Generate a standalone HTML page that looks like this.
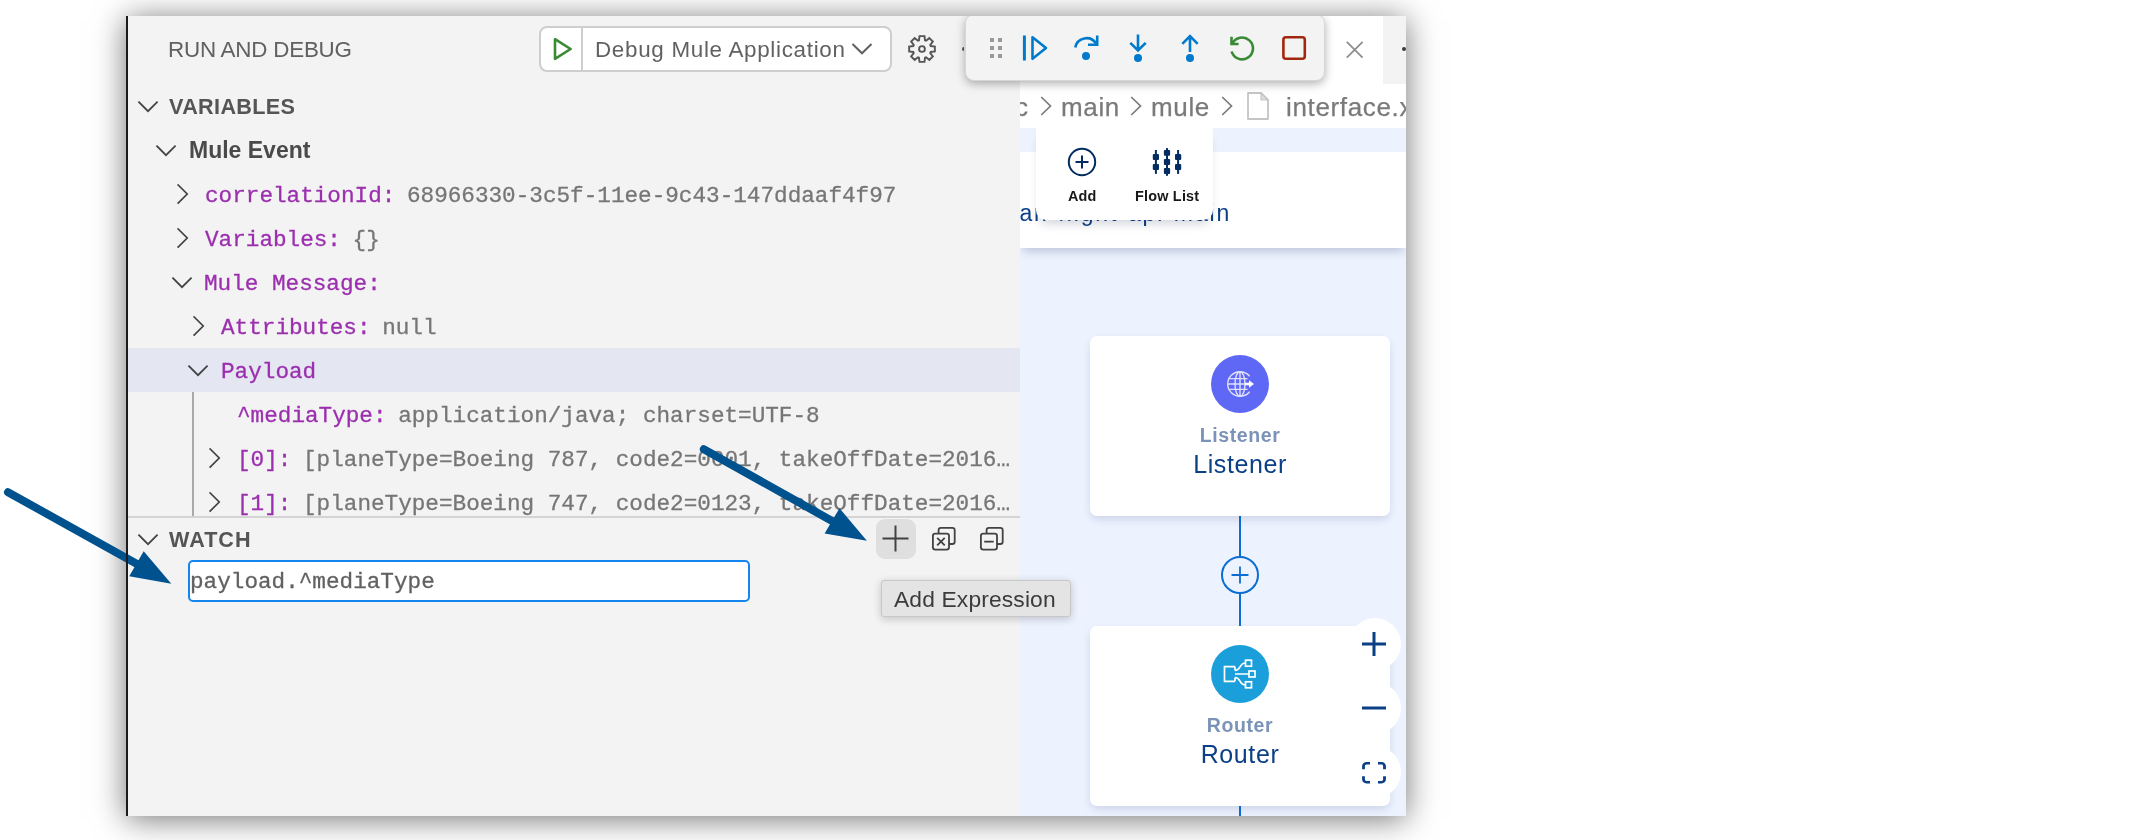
<!DOCTYPE html>
<html>
<head>
<meta charset="utf-8">
<title>Run and Debug</title>
<style>
*{box-sizing:border-box;margin:0;padding:0}
html,body{width:2142px;height:840px;background:#fff;overflow:hidden}
body{font-family:"Liberation Sans",sans-serif;position:relative;color:#616161}
#win{position:absolute;left:126px;top:16px;width:1280px;height:800px;background:#f3f3f3;box-shadow:0 3px 30px rgba(0,0,0,.55)}
#clip{position:absolute;left:0;top:0;width:1280px;height:800px;overflow:hidden}
#edge{position:absolute;left:0;top:0;width:2px;height:800px;background:#1b1b1b;z-index:30}
/* coordinates inside #win are (page-126, page-16) */
#side{position:absolute;left:2px;top:0;width:892px;height:800px;background:#f3f3f3;overflow:hidden}
#ed{position:absolute;left:894px;top:0;width:386px;height:800px;background:#fff;overflow:hidden}
.t{position:absolute;white-space:nowrap;line-height:1;will-change:transform}
.mono{font-family:"Liberation Mono",monospace;font-size:22.66px;color:#767676;margin-top:1.500px;-webkit-text-stroke:.3px}
.v{margin-left:-2px}
.k{color:#9b2fae}
.hd{font-weight:bold;font-size:21.6px;color:#555}
svg{position:absolute;overflow:visible}
.chev{fill:none;stroke:#424242;stroke-width:1.7;stroke-linecap:square;stroke-linejoin:miter}
</style>
</head>
<body>
<div id="win"><div id="clip">
  <div id="side">
    <!-- coordinates inside #side are (page-128, page-16) -->
    <div class="t" id="ttl" style="left:39.700px;top:22.5px;font-size:22.4px;color:#616161;letter-spacing:-.22px">RUN AND DEBUG</div>

    <!-- launch dropdown -->
    <div style="position:absolute;left:411px;top:10px;width:353px;height:46px;border:2px solid #cecece;border-radius:8px;background:#fff"></div>
    <div style="position:absolute;left:453px;top:12px;width:2px;height:42px;background:#cecece"></div>
    <svg style="left:425px;top:21px" width="20" height="24" viewBox="0 0 20 24"><path d="M2 2.2 L17.6 12 L2 21.8 Z" fill="none" stroke="#388a34" stroke-width="2.6" stroke-linejoin="round"/></svg>
    <div class="t" id="dd" style="left:467px;top:23.400px;font-size:22.400px;letter-spacing:.7px;color:#616161">Debug Mule Application</div>
    <svg style="left:722px;top:26.200px" width="24" height="14" viewBox="0 0 24 14"><path d="M2.500 2 L12 11.300 L21.500 2" fill="none" stroke="#616161" stroke-width="2"/></svg>
    <!-- gear -->
    <svg id="gear" style="left:778.950px;top:17.900px" width="30" height="30" viewBox="0 0 30 30"><g fill="none" stroke="#555" stroke-width="1.900" stroke-linejoin="miter"><circle cx="15" cy="15" r="2.900"/><path d="M12.00 6.30L12.50 2.14L17.50 2.14L18.00 6.30L19.03 6.73L22.33 4.14L25.86 7.67L23.27 10.97L23.70 12.00L27.86 12.50L27.86 17.50L23.70 18.00L23.27 19.03L25.86 22.33L22.33 25.86L19.03 23.27L18.00 23.70L17.50 27.86L12.50 27.86L12.00 23.70L10.97 23.27L7.67 25.86L4.14 22.33L6.73 19.03L6.30 18.00L2.14 17.50L2.14 12.50L6.30 12.00L6.73 10.97L4.14 7.67L7.67 4.14L10.97 6.73Z"/></g></svg>
    <div style="position:absolute;left:834.200px;top:31px;width:2.200px;height:4px;border-radius:2px 0 0 2px;background:#555"></div>

    <!-- VARIABLES -->
    <svg style="left:10px;top:85px" width="20" height="12" viewBox="0 0 20 12"><path class="chev" d="M1 1.2 L10 10.2 L19 1.2"/></svg>
    <div class="t hd" style="left:40.5px;top:80px;letter-spacing:.35px">VARIABLES</div>

    <svg style="left:28px;top:129px" width="20" height="12" viewBox="0 0 20 12"><path class="chev" d="M1 1.2 L10 10.2 L19 1.2"/></svg>
    <div class="t" style="left:60.5px;top:123.3px;font-weight:bold;font-size:23px;color:#4a4a4a">Mule Event</div>

    <svg style="left:49px;top:168px" width="12" height="20" viewBox="0 0 12 20"><path class="chev" d="M1.2 1 L10.2 10 L1.2 19"/></svg>
    <div class="t mono" style="left:77px;top:167px"><span class="k">correlationId:</span> <span class="v">68966330-3c5f-11ee-9c43-147ddaaf4f97</span></div>

    <svg style="left:49px;top:212px" width="12" height="20" viewBox="0 0 12 20"><path class="chev" d="M1.2 1 L10.2 10 L1.2 19"/></svg>
    <div class="t mono" style="left:77px;top:211px"><span class="k">Variables:</span> <span class="v">{}</span></div>

    <svg style="left:44px;top:261px" width="20" height="12" viewBox="0 0 20 12"><path class="chev" d="M1 1.2 L10 10.2 L19 1.2"/></svg>
    <div class="t mono" style="left:76px;top:255px"><span class="k">Mule Message:</span></div>

    <svg style="left:65px;top:300px" width="12" height="20" viewBox="0 0 12 20"><path class="chev" d="M1.2 1 L10.2 10 L1.2 19"/></svg>
    <div class="t mono" style="left:93px;top:299px"><span class="k">Attributes:</span> <span class="v">null</span></div>

    <div style="position:absolute;left:0;top:332px;width:892px;height:44px;background:#e4e6f1"></div>
    <svg style="left:60px;top:349px" width="20" height="12" viewBox="0 0 20 12"><path class="chev" d="M1 1.2 L10 10.2 L19 1.2"/></svg>
    <div class="t mono" style="left:93px;top:343px"><span class="k">Payload</span></div>

    <div style="position:absolute;left:64px;top:376px;width:2px;height:124px;background:#a9a9a9"></div>
    <div class="t mono" style="left:109px;top:387px"><span class="k">^mediaType:</span> <span class="v">application/java; charset=UTF-8</span></div>

    <svg style="left:81px;top:432px" width="12" height="20" viewBox="0 0 12 20"><path class="chev" d="M1.2 1 L10.2 10 L1.2 19"/></svg>
    <div class="t mono" style="left:109px;top:431px"><span class="k">[0]:</span> <span class="v">[planeType=Boeing 787, code2=0001, takeOffDate=2016…</span></div>

    <svg style="left:81px;top:476px" width="12" height="20" viewBox="0 0 12 20"><path class="chev" d="M1.2 1 L10.2 10 L1.2 19"/></svg>
    <div class="t mono" style="left:109px;top:475px"><span class="k">[1]:</span> <span class="v">[planeType=Boeing 747, code2=0123, takeOffDate=2016…</span></div>

    <!-- WATCH -->
    <div style="position:absolute;left:0;top:500px;width:892px;height:2px;background:#d4d4d4"></div>
    <div style="position:absolute;left:0;top:502px;width:892px;height:298px;background:#f3f3f3"></div>
    <svg style="left:10px;top:518px" width="20" height="12" viewBox="0 0 20 12"><path class="chev" d="M1 1.2 L10 10.2 L19 1.2"/></svg>
    <div class="t hd" style="left:40.5px;top:513px;letter-spacing:1px">WATCH</div>

    <div style="position:absolute;left:748px;top:503px;width:39.500px;height:40px;border-radius:9px;background:#dfdfdf"></div>
    <svg style="left:753.500px;top:509px" width="27" height="27" viewBox="0 0 27 27"><path d="M13.5 0.5V26.500M0.5 13.5H26.500" fill="none" stroke="#424242" stroke-width="2"/></svg>
    <!-- remove all -->
    <svg style="left:803.300px;top:510.300px" width="25.600" height="25.600" viewBox="0 0 27 27"><g fill="none" stroke="#424242" stroke-width="1.9" stroke-linejoin="round"><rect x="2" y="8" width="17" height="17" rx="2.5"/><path d="M8 8V4.500a2.500 2.500 0 0 1 2.500-2.500H22.500a2.500 2.500 0 0 1 2.500 2.500V16.500a2.500 2.500 0 0 1-2.500 2.500H19"/><path d="M6.500 12.500l8 8M14.500 12.500l-8 8"/></g></svg>
    <!-- collapse all -->
    <svg style="left:851.300px;top:510.300px" width="25.600" height="25.600" viewBox="0 0 27 27"><g fill="none" stroke="#424242" stroke-width="1.9" stroke-linejoin="round"><rect x="2" y="8" width="17" height="17" rx="2.5"/><path d="M8 8V4.500a2.500 2.500 0 0 1 2.500-2.500H22.500a2.500 2.500 0 0 1 2.500 2.500V16.500a2.500 2.500 0 0 1-2.500 2.500H19"/><path d="M5.500 16.500h10"/></g></svg>

    <div style="position:absolute;left:60px;top:544px;width:561.500px;height:42px;border:2px solid #1485ee;border-radius:5px;background:#fff"></div>
    <div class="t mono" style="left:62.300px;top:553px;color:#616161">payload.^mediaType</div>
  </div>

  <div id="ed">
    <!-- coordinates inside #ed are (page-1020, page-16) -->

    <!-- tab bar -->
    <div style="position:absolute;left:0;top:0;width:363px;height:68px;background:#fff"></div>
    <div style="position:absolute;left:363px;top:0;width:23px;height:68px;background:#f3f3f3"></div>
    <svg style="left:325px;top:24px" width="20" height="20" viewBox="0 0 20 20"><path d="M1.800 1.800L17.600 17.600M17.600 1.800L1.800 17.600" fill="none" stroke="#8e8e8e" stroke-width="1.8"/></svg>
    <div style="position:absolute;left:381.5px;top:30.500px;width:4.500px;height:4.500px;border-radius:3px;background:#3b3b3b"></div>
    <!-- breadcrumb -->
    <div style="position:absolute;left:0;top:68px;width:386px;height:44px;background:#fff"></div>
    <div class="t" id="bc" style="left:-5.500px;top:77.500px;font-size:26px;letter-spacing:.65px;color:#7a7a7a;-webkit-text-stroke:.25px">c</div>
    <svg style="left:19.7px;top:80px" width="12" height="20" viewBox="0 0 12 20"><path d="M1.2 1L10.500 10L1.2 19" fill="none" stroke="#7a7a7a" stroke-width="1.7"/></svg>
    <div class="t" id="bc1" style="left:40.500px;top:77.500px;font-size:26px;letter-spacing:.65px;color:#7a7a7a;-webkit-text-stroke:.25px">main</div>
    <svg style="left:109.7px;top:80px" width="12" height="20" viewBox="0 0 12 20"><path d="M1.2 1L10.500 10L1.2 19" fill="none" stroke="#7a7a7a" stroke-width="1.7"/></svg>
    <div class="t" id="bc2" style="left:130.500px;top:77.500px;font-size:26px;letter-spacing:.65px;color:#7a7a7a;-webkit-text-stroke:.25px">mule</div>
    <svg style="left:200.7px;top:80px" width="12" height="20" viewBox="0 0 12 20"><path d="M1.2 1L10.500 10L1.2 19" fill="none" stroke="#7a7a7a" stroke-width="1.7"/></svg>
    <svg style="left:227px;top:76px" width="22" height="28" viewBox="0 0 22 28"><path d="M1 1H14L21 8V27H1Z" fill="#fff" stroke="#c5c5c5" stroke-width="1.8" stroke-linejoin="round"/><path d="M14 1V8H21Z" fill="#dcdcdc" stroke="#c5c5c5" stroke-width="1.2" stroke-linejoin="round"/></svg>
    <div class="t" id="bc3" style="left:265.500px;top:77.500px;font-size:26px;letter-spacing:.65px;color:#7a7a7a;-webkit-text-stroke:.25px">interface.xml</div>

    <!-- canvas -->
    <div style="position:absolute;left:0;top:112px;width:386px;height:688px;background:#ecf2fe"></div>
    <div style="position:absolute;left:0;top:136px;width:386px;height:96px;background:#fff;box-shadow:0 6px 9px -3px rgba(30,50,110,.25)"></div>
    <div class="t" id="flowt" style="right:174.600px;top:186px;font-size:23px;letter-spacing:1.900px;color:#0b3f86">american-flight-api-main</div>
    <!-- floating Add / Flow List -->
    <div style="position:absolute;left:16px;top:112px;width:177px;height:92px;background:#fff;border-radius:0 0 10px 10px;box-shadow:0 7px 11px -4px rgba(10,20,60,.20);clip-path:inset(0 -30px -30px -30px)"></div>
    <svg style="left:47px;top:131px" width="30" height="30" viewBox="0 0 30 30"><g fill="none" stroke="#032d60" stroke-width="2"><circle cx="15" cy="15" r="13.200"/><path d="M15 8.500V21.500M8.500 15H21.500"/></g></svg>
    <div class="t" style="left:48px;top:173px;font-size:14.400px;font-weight:bold;color:#181818;letter-spacing:.1px">Add</div>
    <svg style="left:0;top:0" width="386" height="200" viewBox="0 0 386 200"><g fill="#032d60"><rect x="134.9" y="134" width="2" height="23.9"/><rect x="132.8" y="137.9" width="6.200" height="6.1" rx="1"/><rect x="132.8" y="148" width="6.200" height="6.0" rx="1"/><rect x="146.0" y="132.1" width="2" height="27.7"/><rect x="143.9" y="134" width="6.200" height="5.8" rx="1"/><rect x="143.9" y="143.1" width="6.200" height="5.9" rx="1"/><rect x="143.9" y="151.9" width="6.200" height="6.0" rx="1"/><rect x="157.1" y="134" width="2" height="23.9"/><rect x="155.0" y="137.9" width="6.200" height="6.1" rx="1"/><rect x="155.0" y="148" width="6.200" height="6.0" rx="1"/></g></svg>
    <div class="t" style="left:115px;top:173px;font-size:14.400px;font-weight:bold;color:#181818;letter-spacing:.22px">Flow List</div>

    <!-- connector -->
    <div style="position:absolute;left:219px;top:500px;width:2px;height:300px;background:#0a6dd2"></div>
    <div style="position:absolute;left:201px;top:540px;width:38px;height:38px;border-radius:19px;border:2px solid #0a6dd2;background:#ecf2fe"></div>
    <svg style="left:211px;top:550px" width="18" height="18" viewBox="0 0 18 18"><path d="M9 0.5V17.500M0.5 9H17.500" fill="none" stroke="#0a6dd2" stroke-width="1.8"/></svg>

    <!-- Listener card -->
    <div style="position:absolute;left:70px;top:320px;width:300px;height:180px;background:#fff;border-radius:7px;box-shadow:0 4px 8px -1px rgba(30,50,110,.16)"></div>
    <div style="position:absolute;left:191px;top:339px;width:58px;height:58px;border-radius:29px;background:#5f67f5"></div>
    <svg style="left:206px;top:354px" width="30" height="28" viewBox="0 0 30 28"><g fill="none" stroke="#dfe1fb" stroke-width="1.400"><path d="M23.600 6.300A12.300 12.300 0 1 0 23.600 21.700"/><ellipse cx="14" cy="14" rx="5" ry="12.300"/><path d="M14 1.700V26.300M1.700 14H19M3.400 8.600H21.500M3.400 19.400H21.500"/></g><path d="M19 12.800h4V10.200L28 14l-5 3.800v-2.600H19z" fill="#fff"/></svg>
    <div class="t" id="l1" style="left:110px;top:410px;width:220px;text-align:center;font-size:19.500px;font-weight:bold;color:#7b93b8;letter-spacing:.6px">Listener</div>
    <div class="t" id="l2" style="left:110px;top:435.500px;width:220px;text-align:center;font-size:25px;color:#0b3f86;letter-spacing:.6px">Listener</div>

    <!-- Router card -->
    <div style="position:absolute;left:70px;top:610px;width:300px;height:180px;background:#fff;border-radius:7px;box-shadow:0 4px 8px -1px rgba(30,50,110,.16)"></div>
    <div style="position:absolute;left:191px;top:629px;width:58px;height:58px;border-radius:29px;background:#1b9fdb"></div>
    <svg style="left:203px;top:643px" width="34" height="30" viewBox="0 0 34 30"><g fill="none" stroke="#fff" stroke-width="1.700"><path d="M12 7.700H1.500V22.300H12"/><path d="M12 11.500C18 11.500 16 4 22.500 4M12 15H26M12 18.500C18 18.500 16 26 22.500 26M12 7.700V11.500M12 18.500V22.300"/><rect x="22.500" y="1.200" width="6" height="6"/><rect x="26" y="12" width="6" height="6"/><rect x="22.500" y="22.800" width="6" height="6"/></g></svg>
    <div class="t" id="r1" style="left:110px;top:700px;width:220px;text-align:center;font-size:19.500px;font-weight:bold;color:#7b93b8;letter-spacing:.6px">Router</div>
    <div class="t" id="r2" style="left:110px;top:725.500px;width:220px;text-align:center;font-size:25px;color:#0b3f86;letter-spacing:.6px">Router</div>

    <!-- zoom controls -->
    <div style="position:absolute;left:328.500px;top:601.5px;width:52px;height:52px;border-radius:26px;background:#fff"></div>
    <div style="position:absolute;left:328.500px;top:665.5px;width:52px;height:52px;border-radius:26px;background:#fff"></div>
    <div style="position:absolute;left:328.500px;top:729.5px;width:52px;height:52px;border-radius:26px;background:#fff"></div>
    <svg style="left:342px;top:616px" width="24" height="24" viewBox="0 0 24 24"><path d="M12 0V24M0 12H24" fill="none" stroke="#0b3f86" stroke-width="3"/></svg>
    <svg style="left:342px;top:680px" width="24" height="24" viewBox="0 0 24 24"><path d="M0 12H24" fill="none" stroke="#0b3f86" stroke-width="3"/></svg>
    <svg style="left:342px;top:745.500px" width="24" height="21.500" viewBox="0 0 24 24" preserveAspectRatio="none"><path d="M1.500 8V4.500a3 3 0 0 1 3-3H8M16 1.500h3.500a3 3 0 0 1 3 3V8M22.500 16v3.500a3 3 0 0 1-3 3H16M8 22.500H4.500a3 3 0 0 1-3-3V16" fill="none" stroke="#0b3f86" stroke-width="2.800"/></svg>
  </div>

  <!-- debug toolbar: coordinates inside #win are (page-126, page-16) -->
  <div id="dbg" style="position:absolute;left:839px;top:-2px;width:359.500px;height:67px;background:#f3f3f3;border-radius:9px;border:1px solid #d6d6d6;box-shadow:0 3px 10px rgba(0,0,0,.3)"></div>
  <svg style="left:840px;top:0" width="360" height="66" viewBox="0 0 360 66">
    <g fill="#999"><rect x="24" y="22" width="4" height="4"/><rect x="32" y="22" width="4" height="4"/><rect x="24" y="30" width="4" height="4"/><rect x="32" y="30" width="4" height="4"/><rect x="24" y="38" width="4" height="4"/><rect x="32" y="38" width="4" height="4"/></g>
    <g fill="none" stroke="#007acc" stroke-width="2.600">
      <path d="M58.400 19.500V44.500" stroke-width="3"/><path d="M66.500 21.200L80 32L66.500 42.800Z" stroke-linejoin="round"/>
      <path d="M109.300 31.500A11.300 11.300 0 0 1 130 27.500"/><path d="M131.200 19.500V28.800H122"/>
      <path d="M172 18.500V34.500M164.300 26.800L172 34.500L179.700 26.800"/>
      <path d="M224 36V20.500M216.300 27.900L224 20.200L231.700 27.900"/>
    </g>
    <g fill="#007acc"><circle cx="120" cy="40" r="4"/><circle cx="172" cy="42" r="4"/><circle cx="224" cy="42" r="4"/></g>
    <path d="M266.300 27.600A10.900 10.900 0 1 1 265.600 35.500" fill="none" stroke="#388a34" stroke-width="2.600"/><path d="M265.500 20.800V28H272.600" fill="none" stroke="#388a34" stroke-width="2.600"/>
    <rect x="317.400" y="21.300" width="21.400" height="21.400" rx="2.500" fill="none" stroke="#a1260d" stroke-width="2.600"/>
  </svg>
  <!-- tooltip -->
  <div style="position:absolute;left:755px;top:563.500px;width:190px;height:37px;background:#e4e4e4;border:1px solid #c8c8c8;border-radius:3px;box-shadow:0 2px 8px rgba(0,0,0,.2)"></div>
  <div class="t" id="tip" style="left:768px;top:571.500px;font-size:22.800px;letter-spacing:.15px;color:#3b3b3b">Add Expression</div>
  <div id="edge"></div>
</div></div>
<!-- annotation arrows (page coordinates) -->
<svg style="left:0;top:0" width="2142" height="840" viewBox="0 0 2142 840"><g fill="#00528f" stroke="#00528f">
<path d="M8 492.200L137 564" stroke-width="8" stroke-linecap="round" fill="none"/><path d="M143.700 551.200L171.300 583.700L129.200 576.200Z" stroke="none"/>
<path d="M703.800 449.200L832.500 521.200" stroke-width="8" stroke-linecap="round" fill="none"/><path d="M839.500 508.300L866.900 540.800L824.600 533.500Z" stroke="none"/>
</g></svg>
</body>
</html>
